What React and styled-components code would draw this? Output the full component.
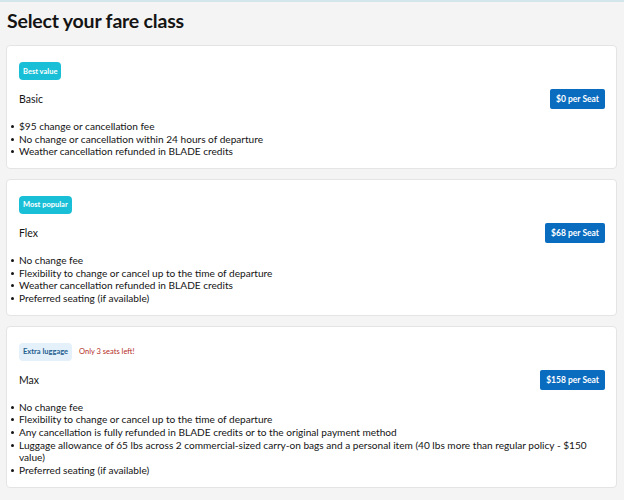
import React from "react";
import styled, { createGlobalStyle } from "styled-components";

const Global = createGlobalStyle`
  html, body {
    margin: 0;
    padding: 0;
    background: #f4f4f4;
  }
  body {
    font-family: Lato, "Noto Sans", "Liberation Sans", sans-serif;
    color: #141414;
  }
`;

const Page = styled.div`
  border-top: 2px solid #d3e6ec;
  padding: 7px 7px 12px 6px;
`;

const Title = styled.h1`
  margin: 0 0 12px 1px;
  font-size: 19.5px;
  line-height: 24px;
  font-weight: 700;
  letter-spacing: -0.2px;
`;

const Stack = styled.div`
  display: flex;
  flex-direction: column;
  gap: 10px;
`;

const Card = styled.section`
  background: #fff;
  border: 1px solid #e4e4e4;
  border-radius: 4px;
  padding: 16px 11px 10px 12px;
`;

const Tags = styled.div`
  display: flex;
  align-items: center;
  gap: 7px;
`;

const Badge = styled.span`
  display: inline-flex;
  align-items: center;
  height: 18px;
  padding: 0 4px;
  border-radius: 4px;
  font-size: 7.5px;
  font-weight: 700;
  background: ${(p) => (p.$soft ? "#e4f0fa" : "#19bfd6")};
  color: ${(p) => (p.$soft ? "#1f5f8f" : "#fff")};
`;

const Scarcity = styled.span`
  font-size: 7.5px;
  color: #b42b25;
`;

const Row = styled.div`
  display: flex;
  align-items: center;
  justify-content: space-between;
  margin-top: 9px;
`;

const Name = styled.span`
  font-size: 10.5px;
`;

const Price = styled.button`
  height: 20px;
  padding: 0 6px;
  border: none;
  border-radius: 2px;
  background: #0a6cbf;
  color: #fff;
  font-family: inherit;
  font-size: 8.5px;
  font-weight: 700;
  cursor: pointer;
`;

const Perks = styled.ul`
  margin: 11px 0 0;
  padding: 0;
  list-style: none;
`;

const Perk = styled.li`
  position: relative;
  font-size: 10.1px;
  line-height: 12.65px;
  &::before {
    content: "";
    position: absolute;
    left: -8px;
    top: 5px;
    width: 3px;
    height: 3px;
    border-radius: 50%;
    background: #141414;
  }
`;

const fares = [
  {
    tag: "Best value",
    name: "Basic",
    price: "$0 per Seat",
    perks: [
      "$95 change or cancellation fee",
      "No change or cancellation within 24 hours of departure",
      "Weather cancellation refunded in BLADE credits",
    ],
  },
  {
    tag: "Most popular",
    name: "Flex",
    price: "$68 per Seat",
    perks: [
      "No change fee",
      "Flexibility to change or cancel up to the time of departure",
      "Weather cancellation refunded in BLADE credits",
      "Preferred seating (if available)",
    ],
  },
  {
    tag: "Extra luggage",
    soft: true,
    note: "Only 3 seats left!",
    name: "Max",
    price: "$158 per Seat",
    perks: [
      "No change fee",
      "Flexibility to change or cancel up to the time of departure",
      "Any cancellation is fully refunded in BLADE credits or to the original payment method",
      "Luggage allowance of 65 lbs across 2 commercial-sized carry-on bags and a personal item (40 lbs more than regular policy - $150 value)",
      "Preferred seating (if available)",
    ],
  },
];

export default function App() {
  return (
    <Page>
      <Global />
      <Title>Select your fare class</Title>
      <Stack>
        {fares.map((f) => (
          <Card key={f.name}>
            <Tags>
              <Badge $soft={f.soft}>{f.tag}</Badge>
              {f.note && <Scarcity>{f.note}</Scarcity>}
            </Tags>
            <Row>
              <Name>{f.name}</Name>
              <Price>{f.price}</Price>
            </Row>
            <Perks>
              {f.perks.map((p) => (
                <Perk key={p}>{p}</Perk>
              ))}
            </Perks>
          </Card>
        ))}
      </Stack>
    </Page>
  );
}
